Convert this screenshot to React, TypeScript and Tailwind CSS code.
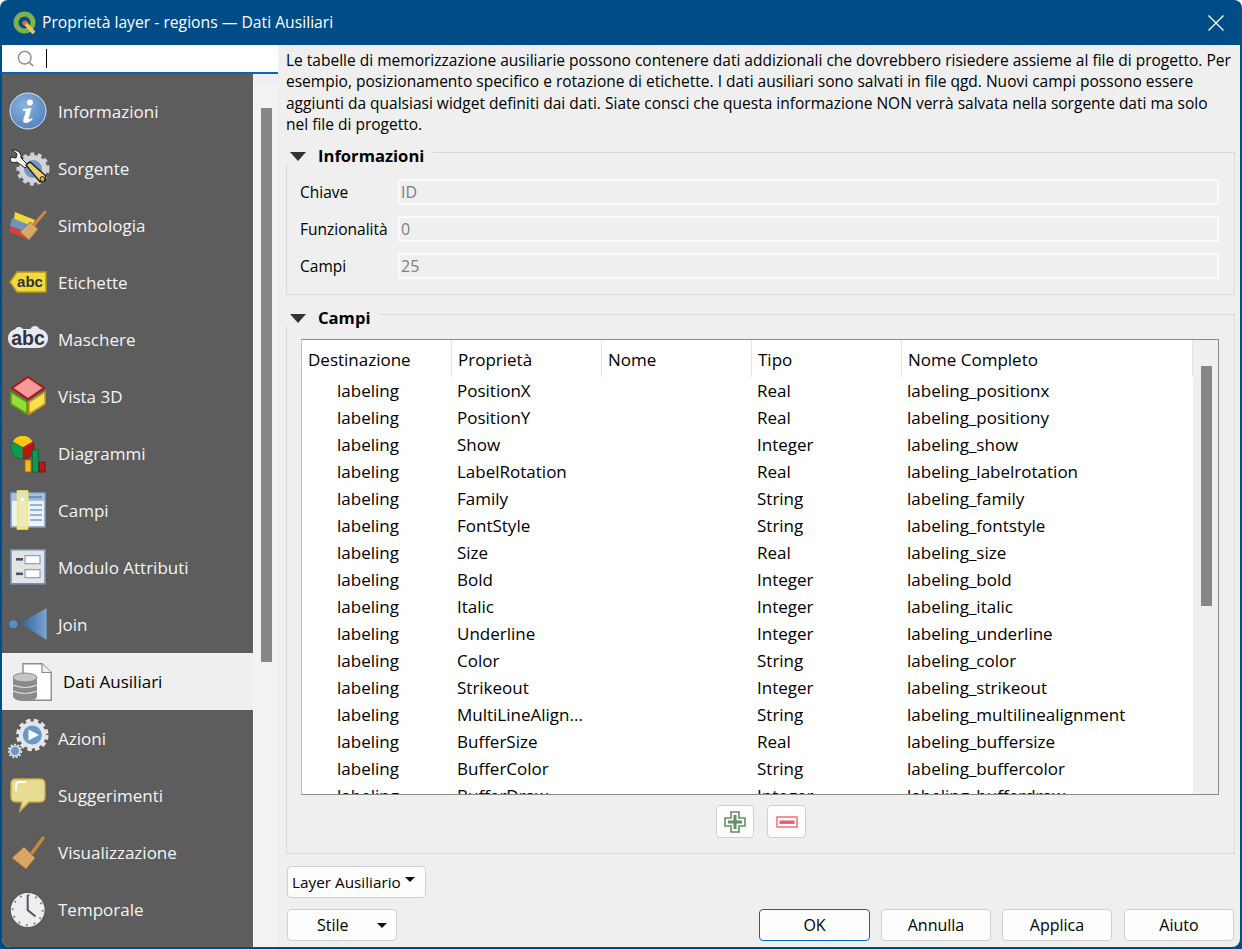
import { Search } from "lucide-react";

const rows = [
  ["PositionX", "Real", "labeling_positionx"],
  ["PositionY", "Real", "labeling_positiony"],
  ["Show", "Integer", "labeling_show"],
  ["LabelRotation", "Real", "labeling_labelrotation"],
  ["Family", "String", "labeling_family"],
  ["FontStyle", "String", "labeling_fontstyle"],
  ["Size", "Real", "labeling_size"],
  ["Bold", "Integer", "labeling_bold"],
  ["Italic", "Integer", "labeling_italic"],
  ["Underline", "Integer", "labeling_underline"],
  ["Color", "String", "labeling_color"],
  ["Strikeout", "Integer", "labeling_strikeout"],
  ["MultiLineAlign...", "String", "labeling_multilinealignment"],
  ["BufferSize", "Real", "labeling_buffersize"],
  ["BufferColor", "String", "labeling_buffercolor"],
  ["BufferDraw", "Integer", "labeling_bufferdraw"],
];

function Svg({ children }: { children: React.ReactNode }) {
  return (
    <svg width="38" height="38" viewBox="0 0 38 38" className="shrink-0 overflow-visible">
      {children}
    </svg>
  );
}

function Brush({ head }: { head: string }) {
  return <polygon points={head} fill="#d9a868" stroke="#a9742f" strokeWidth="1" />;
}

const icons: Record<string, React.ReactNode> = {
  info: (
    <Svg>
      <defs>
        <radialGradient id="infoG" cx="40%" cy="35%" r="70%">
          <stop offset="0%" stopColor="#8db3dd" />
          <stop offset="100%" stopColor="#4f83bf" />
        </radialGradient>
      </defs>
      <circle cx="19" cy="18" r="18" fill="url(#infoG)" stroke="#dfe8f2" strokeWidth="1" />
      <circle cx="21" cy="9.5" r="3" fill="#fff" />
      <path d="M14 16 L22.5 15 L19.5 26 Q21 26.5 23 25 L23.5 26.5 Q19 31 15 29.5 Q13.5 28.5 14.5 26 L17 18 L14 18 Z" fill="#fff" />
    </Svg>
  ),
  source: (
    <Svg>
      <circle cx="24" cy="19" r="11.5" fill="#6f9ac8" stroke="#d4d4d4" strokeWidth="5" />
      <circle cx="24" cy="19" r="15" fill="none" stroke="#d4d4d4" strokeWidth="3" strokeDasharray="4 3.5" />
      <path d="M1 10 Q3 14 8 12 L16 18 L19 15 L12 8 Q13 2 6 0 L3 0 L8 4 L7 8 L2 7 Z" fill="#f2f2f2" stroke="#222" strokeWidth="1" />
      <path d="M17 15 L21 12 L37 26 L36 31 L31 32 Z" fill="#e8d170" stroke="#222" strokeWidth="1.4" />
      <circle cx="33.5" cy="29" r="2.5" fill="#c8b060" stroke="#222" strokeWidth="1" />
    </Svg>
  ),
  symbology: (
    <Svg>
      <polygon points="6,5 26,13 22,20 5,12" fill="#f0d93e" />
      <polygon points="3,11 23,19 20,26 1,19" fill="#6f93bf" />
      <polygon points="1,19 20,27 20,33 1,25" fill="#d9403a" />
      <line x1="36" y1="5" x2="24" y2="19" stroke="#c98b3a" strokeWidth="3" strokeLinecap="round" />
      <Brush head="11,25 21,15 29,22 20,33" />
    </Svg>
  ),
  labels: (
    <Svg>
      <polygon points="1,18 8,8 37,8 37,28 8,28" fill="#f3d93b" stroke="#b59b1b" strokeWidth="1.5" />
      <text x="21" y="23" textAnchor="middle" fontSize="15" fontWeight="700" fill="#33312a" className="[font-family:'Liberation_Sans',sans-serif]">abc</text>
    </Svg>
  ),
  masks: (
    <Svg>
      <rect x="-1" y="8" width="40" height="19" rx="9" fill="#e9e9f5" />
      <circle cx="10" cy="10" r="4" fill="#e9e9f5" />
      <circle cx="26" cy="10" r="5" fill="#e9e9f5" />
      <text x="19" y="24" textAnchor="middle" fontSize="19.5" fontWeight="700" fill="#33333a" className="[font-family:'Liberation_Sans',sans-serif]">abc</text>
    </Svg>
  ),
  view3d: (
    <Svg>
      <polygon points="19,-1 35,10 19,21 3,10" fill="#f59a9a" stroke="#b01010" strokeWidth="1.6" />
      <polygon points="2,14 18,24 18,36 2,26" fill="#94dd3e" stroke="#5f9a12" strokeWidth="1.6" />
      <polygon points="20,24 36,14 36,26 20,36" fill="#fbdf4c" stroke="#c49b17" strokeWidth="1.6" />
    </Svg>
  ),
  diagrams: (
    <Svg>
      <circle cx="13.7" cy="12.3" r="11.5" fill="#b81810" stroke="#333" strokeWidth="1" />
      <path d="M13.7 12.3 L3.7 6.5 A11.5 11.5 0 0 1 23.7 6.5 Z" fill="#fbc70f" />
      <path d="M13.7 12.3 L3.7 6.5 A11.5 11.5 0 0 0 13.7 23.8 Z" fill="#0f9a52" />
      <rect x="16" y="25" width="6" height="12" fill="#fbb80f" stroke="#9a6a08" strokeWidth="0.8" />
      <rect x="23.3" y="15" width="6" height="22" fill="#0f9a52" stroke="#0a5f33" strokeWidth="0.8" />
      <rect x="30.3" y="27.3" width="5.7" height="9.7" fill="#b81810" stroke="#6b0d08" strokeWidth="0.8" />
    </Svg>
  ),
  fields: (
    <Svg>
      <rect x="2" y="1" width="34" height="34" fill="#eef2f7" stroke="#7b9dc4" strokeWidth="1.5" />
      <rect x="3" y="2" width="32" height="7" fill="#a9c1de" />
      <rect x="20" y="4" width="13" height="2.5" fill="#6f93bf" />
      <path d="M21 13 H33 M21 18 H33 M21 23 H33 M21 28 H33" stroke="#7b9dc4" strokeWidth="1.4" />
      <rect x="8.5" y="-1" width="10" height="38" fill="#ece8b4" fillOpacity="0.9" stroke="#f3ee54" strokeWidth="1.6" />
      <rect x="12" y="6" width="3" height="3" fill="#fff" />
    </Svg>
  ),
  form: (
    <Svg>
      <rect x="2" y="0.8" width="34" height="34" fill="#e4e4e4" stroke="#6f93bb" strokeWidth="1.6" />
      <rect x="7" y="9" width="7" height="2.6" fill="#44546a" />
      <rect x="7" y="23.5" width="7" height="2.6" fill="#44546a" />
      <rect x="16" y="6.7" width="15" height="8" fill="#fff" stroke="#6f93bb" strokeWidth="1" />
      <rect x="16" y="20.7" width="15" height="8" fill="#fff" stroke="#6f93bb" strokeWidth="1" />
    </Svg>
  ),
  join: (
    <Svg>
      <defs>
        <linearGradient id="joinG" x1="0" x2="1" y1="0" y2="0">
          <stop offset="0%" stopColor="#2f5f9a" />
          <stop offset="100%" stopColor="#7ba4d2" />
        </linearGradient>
      </defs>
      <circle cx="4.3" cy="18.3" r="4" fill="#5b8cc2" />
      <polygon points="11,17 37.7,2 37.7,34" fill="url(#joinG)" />
    </Svg>
  ),
  aux: (
    <svg width="39" height="38" viewBox="0 0 39 38" className="shrink-0">
      <path d="M10 .8 H29 L38.2 9.5 V37.2 H10 Z" fill="#fff" stroke="#8c8c8c" strokeWidth="1.4" />
      <path d="M29 .8 V9.5 H38.2" fill="#eee" stroke="#8c8c8c" strokeWidth="1.2" />
      <path d="M0 14 V33 Q0 38 12 38 Q24 38 24 33 V14 Z" fill="#8a8a8a" />
      <ellipse cx="12" cy="14.5" rx="12" ry="4.5" fill="#c4c4c4" stroke="#777" strokeWidth="0.8" />
      <path d="M0 22 Q12 27 24 22 M0 28 Q12 33 24 28" stroke="#dcdcdc" strokeWidth="1.2" fill="none" />
    </svg>
  ),
  actions: (
    <Svg>
      <circle cx="23.3" cy="15" r="11.5" fill="#6a98cc" stroke="#e6e6e6" strokeWidth="4" />
      <circle cx="23.3" cy="15" r="14.5" fill="none" stroke="#e6e6e6" strokeWidth="3.5" strokeDasharray="4.5 3.2" />
      <polygon points="19.5,9.5 30,15 19.5,20.5" fill="#fff" />
      <circle cx="6" cy="31" r="5" fill="#6a98cc" stroke="#e6e6e6" strokeWidth="1.6" />
      <circle cx="6" cy="31" r="6.5" fill="none" stroke="#e6e6e6" strokeWidth="1.5" strokeDasharray="2 1.6" />
    </Svg>
  ),
  tips: (
    <Svg>
      <path d="M7 2 H31 Q36 2 36 7 V20 Q36 25 31 25 H20 L11 34 L13 25 H7 Q2 25 2 20 V7 Q2 2 7 2 Z" fill="#e7dc8f" stroke="#c6ad4c" strokeWidth="1.4" />
      <path d="M7 14 V8 Q7 5 11 5 H17" fill="none" stroke="#fff" strokeWidth="1.8" />
    </Svg>
  ),
  rendering: (
    <Svg>
      <line x1="34" y1="4" x2="23" y2="19" stroke="#c98b3a" strokeWidth="3.4" strokeLinecap="round" />
      <Brush head="3,24 15,13 26,24 17,35" />
    </Svg>
  ),
  temporal: (
    <Svg>
      <circle cx="18.7" cy="19" r="17.5" fill="#eeeeee" stroke="#555" strokeWidth="1.2" />
      <circle cx="18.7" cy="19" r="15" fill="none" stroke="#5b86b8" strokeWidth="2" strokeDasharray="1.8 6" />
      <path d="M18.7 4 V19 L26.5 25.5" fill="none" stroke="#555" strokeWidth="2" />
    </Svg>
  ),
};

const nav = [
  ["info", "Informazioni"],
  ["source", "Sorgente"],
  ["symbology", "Simbologia"],
  ["labels", "Etichette"],
  ["masks", "Maschere"],
  ["view3d", "Vista 3D"],
  ["diagrams", "Diagrammi"],
  ["fields", "Campi"],
  ["form", "Modulo Attributi"],
  ["join", "Join"],
  ["aux", "Dati Ausiliari"],
  ["actions", "Azioni"],
  ["tips", "Suggerimenti"],
  ["rendering", "Visualizzazione"],
  ["temporal", "Temporale"],
];

function GroupHeader({ title }: { title: string }) {
  return (
    <div className="flex items-center h-[16px]">
      <svg width="16" height="9" viewBox="0 0 16 9" className="ml-[4px] shrink-0">
        <polygon points="0,0 16,0 8,9" fill="#333" />
      </svg>
      <span className="ml-[12px] mb-[2px] font-bold text-black text-[16.6px]">{title}</span>
      <div className="self-end h-[12px] border-t border-r border-[#d9d9d9] ml-[9px] flex-1" />
    </div>
  );
}

function InfoRow({ label, value }: { label: string; value: string }) {
  return (
    <div className="flex items-center h-[26px]">
      <span className="w-[98px] shrink-0 text-black text-[15.5px]">{label}</span>
      <div className="flex-1 h-[26px] border-2 border-[#f9f9f9] bg-[#efefef] pl-[1px] flex items-center text-[#808080]">{value}</div>
    </div>
  );
}

function Btn({ children, className }: { children: React.ReactNode; className: string }) {
  return (
    <div className={`rounded-[4px] border border-[#d0d0d0] bg-[#fdfdfd] flex items-center justify-center text-black ${className}`}>
      {children}
    </div>
  );
}

function Caret() {
  return (
    <svg width="10" height="5" viewBox="0 0 10 5">
      <polygon points="0,0 10,0 5,5" fill="#111" />
    </svg>
  );
}

export default function App() {
  return (
    <div className="w-[1242px] h-[949px] bg-[#004c87] rounded-t-[8px] overflow-hidden flex flex-col [font-family:'Open_Sans',sans-serif] text-[16px] leading-[21.3px]">
      <div className="h-[45px] shrink-0 flex items-center pl-[13px] pr-[18px] text-white">
        <svg width="24" height="24" viewBox="0 0 24 24" className="shrink-0">
          <circle cx="11.5" cy="11.5" r="8.5" fill="none" stroke="#7fb24a" strokeWidth="5" />
          <circle cx="12" cy="12" r="2.6" fill="#e2702a" />
          <path d="M13 13 L21 22" stroke="#e9c75a" strokeWidth="4" />
        </svg>
        <span className="ml-[5px] pt-[1px] text-[15.7px]">Proprietà layer - regions — Dati Ausiliari</span>
        <svg width="16" height="16" viewBox="0 0 16 16" className="ml-auto">
          <path d="M.5 .5 L15.5 15.5 M15.5 .5 L.5 15.5" stroke="#fff" strokeWidth="1.3" />
        </svg>
      </div>

      <div className="flex-1 mx-[2px] mb-[2px] flex bg-[#efefef] rounded-b-[8px] overflow-hidden min-h-0">
        <div className="w-[276px] shrink-0 flex flex-col">
          <div className="h-[29px] shrink-0 bg-white border-b-2 border-[#0067c0] flex items-center pl-[14px]">
            <Search className="text-[#8a8a8a]" size={19} strokeWidth={1.8} />
            <div className="ml-[11px] w-px h-[19px] bg-black" />
          </div>
          <div className="flex-1 flex min-h-0">
            <div className="w-[251px] bg-[#5d5d5d] pt-[9px] shrink-0">
              {nav.map(([key, label]) =>
                key === "aux" ? (
                  <div key={key} className="h-[57px] bg-[#efefef] flex items-center pl-[11px] gap-[11px] text-black">
                    {icons[key]}
                    <span className="text-[17px]">{label}</span>
                  </div>
                ) : (
                  <div key={key} className="h-[57px] flex items-center pl-[7px] gap-[11px] text-[#f4f4f4]">
                    {icons[key]}
                    <span className="text-[17px]">{label}</span>
                  </div>
                )
              )}
            </div>
            <div className="flex-1 pt-[9px]">
              <div className="h-full bg-[#f2f2f2] border-l border-[#f8f8f8] pt-[25px] pl-[7px]">
                <div className="w-[11px] h-[554px] bg-[#868686]" />
              </div>
            </div>
          </div>
        </div>

        <div className="flex-1 min-w-0 pl-[8px] pr-[5px] text-black">
          <div className="pt-[5px] whitespace-nowrap text-[15.53px] leading-[21.3px]">
            <div>Le tabelle di memorizzazione ausiliarie possono contenere dati addizionali che dovrebbero risiedere assieme al file di progetto. Per</div>
            <div>esempio, posizionamento specifico e rotazione di etichette. I dati ausiliari sono salvati in file qgd. Nuovi campi possono essere</div>
            <div>aggiunti da qualsiasi widget definiti dai dati. Siate consci che questa informazione NON verrà salvata nella sorgente dati ma solo</div>
            <div>nel file di progetto.</div>
          </div>

          <div className="mt-[13px]">
            <GroupHeader title="Informazioni" />
            <div className="h-[131px] pt-[15px] pl-[13px] pr-[15px] border border-t-0 border-[#d9d9d9] flex flex-col gap-[11px]">
              <InfoRow label="Chiave" value="ID" />
              <InfoRow label="Funzionalità" value="0" />
              <InfoRow label="Campi" value="25" />
            </div>
          </div>

          <div className="mt-[15px]">
            <GroupHeader title="Campi" />
            <div className="h-[528px] pt-[13px] pl-[14px] pr-[15px] border border-t-0 border-[#d9d9d9]">
              <div className="h-[456px] bg-white border border-[#8a8a8a] border-l-[#c0c0c0] flex overflow-hidden text-[17px]">
                <div className="w-[891px] shrink-0">
                  <div className="h-[36.5px] grid grid-cols-[150px_150px_150px_150px_291px] items-stretch">
                    {["Destinazione", "Proprietà", "Nome", "Tipo", "Nome Completo"].map((h) => (
                      <div key={h} className="pl-[6px] pt-[3px] flex items-center border-r border-[#e4e4e4]">{h}</div>
                    ))}
                  </div>
                  {rows.map(([prop, type, name]) => (
                    <div key={name} className="h-[27px] grid grid-cols-[150px_150px_150px_150px_291px] items-center">
                      <div className="pl-[35px]">labeling</div>
                      <div className="pl-[5px]">{prop}</div>
                      <div />
                      <div className="pl-[5px]">{type}</div>
                      <div className="pl-[5px]">{name}</div>
                    </div>
                  ))}
                </div>
                <div className="flex-1 bg-[#efefef] pt-[26px] pl-[8px]">
                  <div className="w-[11px] h-[240px] bg-[#868686]" />
                </div>
              </div>
              <div className="flex justify-end gap-[13px] mt-[10px] pr-[413px]">
                <Btn className="w-[38px] h-[33px]">
                  <svg width="22" height="22" viewBox="0 0 22 22">
                    <path d="M7 1 H15 V7 H21 V15 H15 V21 H7 V15 H1 V7 H7 Z" fill="#fff" stroke="#5f9160" strokeWidth="1.6" />
                    <path d="M9.5 4 H12.5 V9.5 H18 V12.5 H12.5 V18 H9.5 V12.5 H4 V9.5 H9.5 Z" fill="#5f9160" />
                  </svg>
                </Btn>
                <Btn className="w-[39px] h-[33px]">
                  <svg width="22" height="12" viewBox="0 0 22 12">
                    <rect x="1" y="1" width="20" height="10" fill="#fff" stroke="#f0787c" strokeWidth="1.6" />
                    <rect x="3.5" y="4.5" width="15" height="3.4" fill="#ee5b60" />
                  </svg>
                </Btn>
              </div>
            </div>
          </div>

          <Btn className="mt-[12px] w-[139px] h-[32px] ml-[1px] !justify-start pl-[4px] gap-[4px] text-[15.3px]">
            Layer Ausiliario
            <span className="mb-[6px] flex"><Caret /></span>
          </Btn>

          <div className="mt-[11px] flex items-center pl-[1px] pr-[1px]">
            <Btn className="w-[110px] h-[32px] !justify-start pl-[29px] gap-[28px]">
              Stile
              <Caret />
            </Btn>
            <Btn className="w-[111px] h-[32px] ml-auto !border-[#0067c0]">OK</Btn>
            <Btn className="w-[110px] h-[32px] ml-[11px]">Annulla</Btn>
            <Btn className="w-[110px] h-[32px] ml-[11px]">Applica</Btn>
            <Btn className="w-[110px] h-[32px] ml-[12px]">Aiuto</Btn>
          </div>
        </div>
      </div>
    </div>
  );
}
